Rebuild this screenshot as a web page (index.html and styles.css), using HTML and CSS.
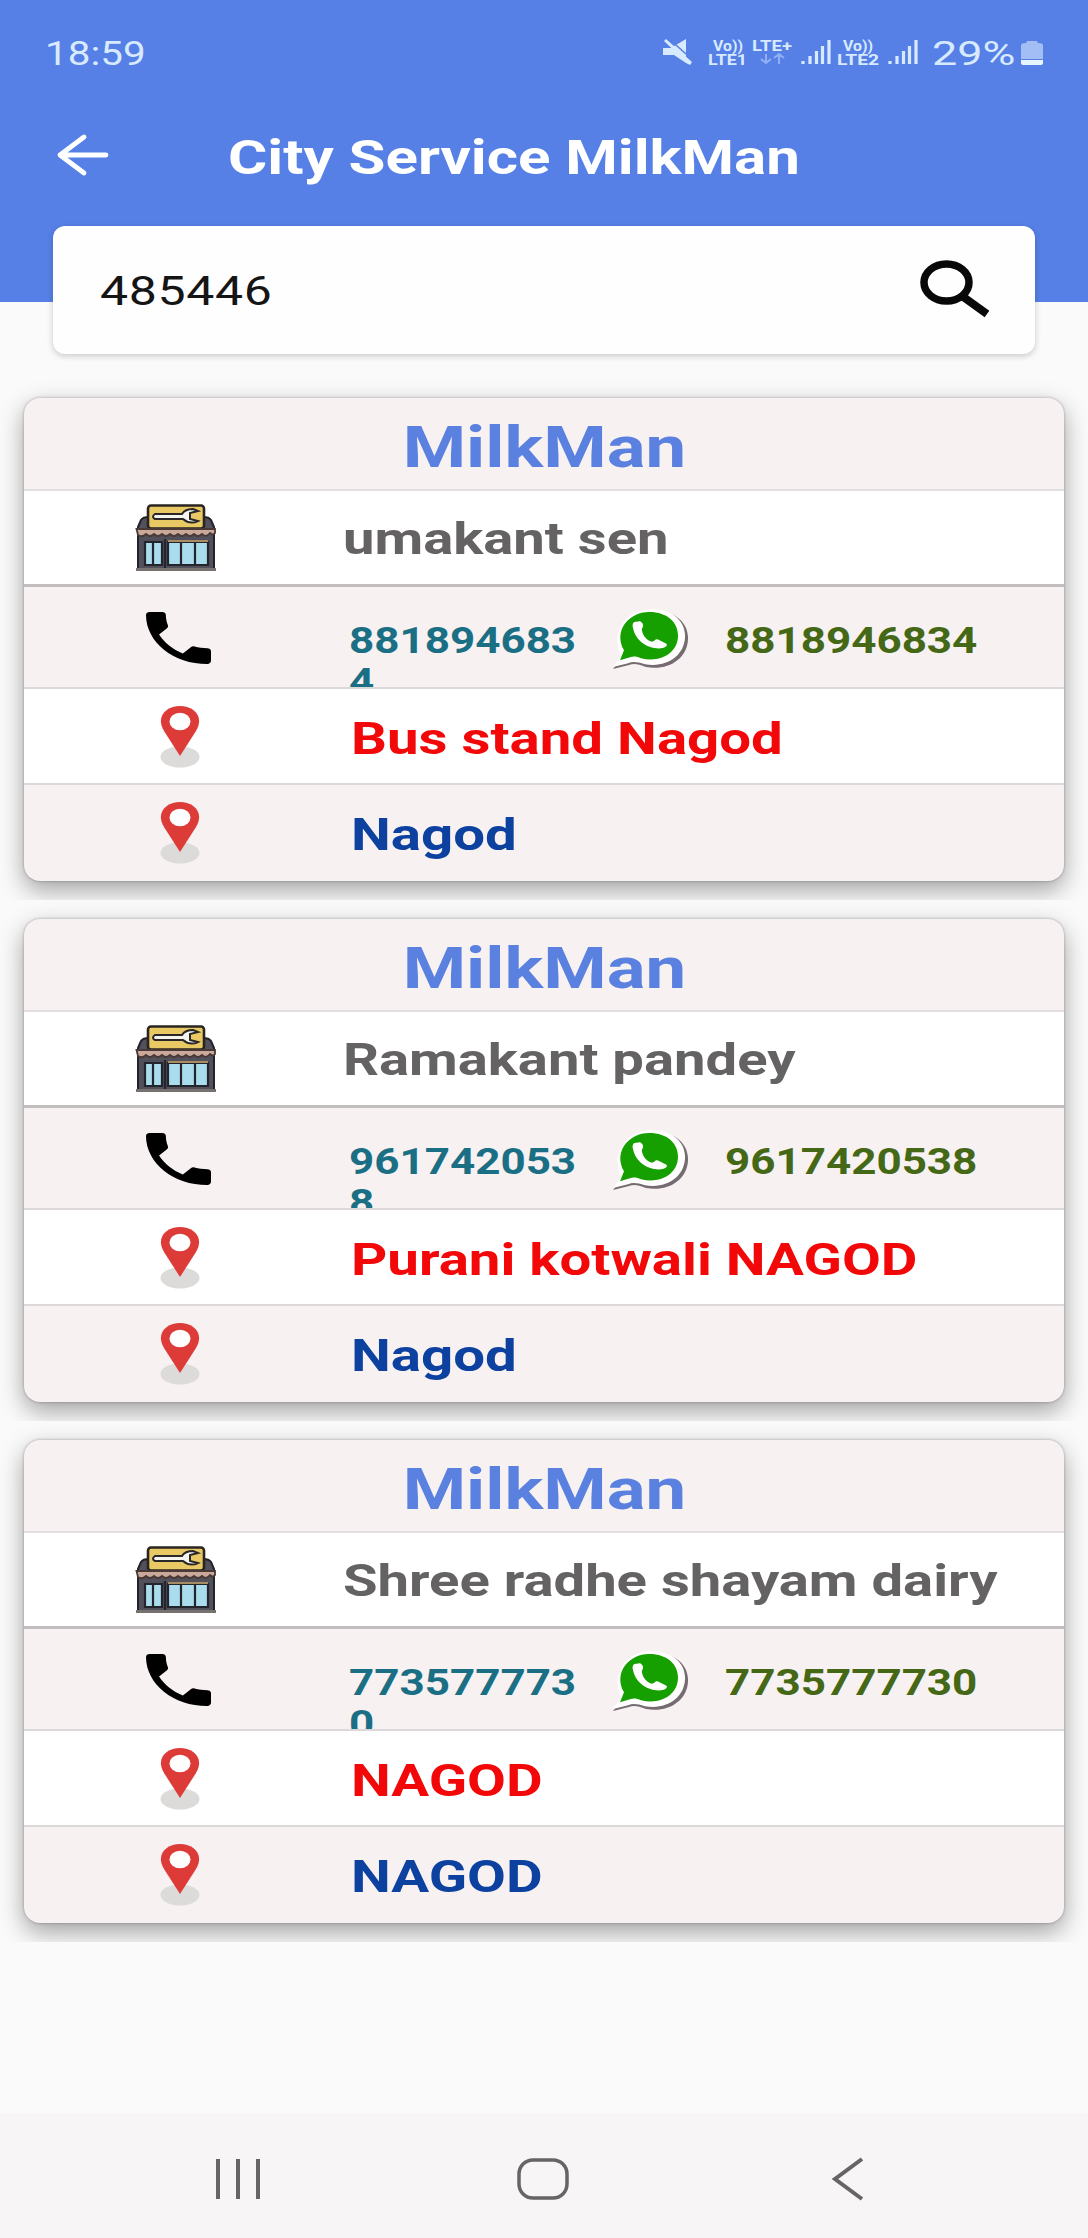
FILE: index.html
```
<!DOCTYPE html>
<html lang="en">
<head>
<meta charset="utf-8">
<title>City Service MilkMan</title>
<link rel="stylesheet" href="styles.css">
</head>
<body>
<svg class="sprite" width="0" height="0" aria-hidden="true">
  <symbol id="store" viewBox="0 0 82 67">
    <path d="M3 23L6 16Q8 13 14 13H68Q74 13 76 16L79 23V65H3Z" fill="#51505b" stroke="#24222a" stroke-width="2"/>
    <rect x="13" y="1.5" width="56" height="23" rx="3" fill="#e9c963" stroke="#292520" stroke-width="2.6"/>
    <path d="M20 10H47Q50 5 58 5L63 7L55 9V15L63 17Q55 21 48 15H20Q16 13 20 10Z" fill="#f5f4ef" stroke="#29272a" stroke-width="2"/>
    <path d="M1.500 25H80V29Q78 32 75 29Q71 34 67 30Q63 34 59 30Q55 34 51 30Q47 34 43 30Q39 34 35 30Q31 34 27 30Q23 34 19 30Q15 34 11 30Q7 34 3 31Z" fill="#caa99b" stroke="#493936" stroke-width="1.800"/>
    <path d="M10 38H27V61H10ZM33 38H73V61H33Z" fill="#a9dcec" stroke="#24252c" stroke-width="2.200"/>
    <path d="M18 38V61M46 38V61M60 38V61M30 35V64" stroke="#24252c" stroke-width="2.200"/>
    <path d="M33 37H73" stroke="#a88d63" stroke-width="2"/>
    <path d="M1 65.500H81" stroke="#77716f" stroke-width="3"/>
  </symbol>
  <symbol id="phone" viewBox="3 3 18 18" preserveAspectRatio="none">
    <path d="M6.620 10.790C8.060 13.620 10.380 15.930 13.210 17.380L15.410 15.180C15.680 14.910 16.080 14.820 16.430 14.940C17.550 15.310 18.760 15.510 20 15.510C20.550 15.510 21 15.960 21 16.510V20C21 20.550 20.550 21 20 21C10.610 21 3 13.390 3 4C3 3.450 3.450 3 4 3H7.500C8.050 3 8.500 3.450 8.500 4C8.500 5.250 8.700 6.450 9.070 7.570C9.180 7.920 9.100 8.310 8.820 8.590Z" fill="#000"/>
  </symbol>
  <symbol id="whatsapp" viewBox="0 0 78 66" preserveAspectRatio="none">
    <path d="M1 62L10 50C-1 26 14 4 40 3C63 2 77 15 76 32C75 52 56 64 34 60C26 57 22 56 17 58Z" fill="#766b70"/>
    <path d="M1 60L9 49C-2 25 14 2 38 1C61 1 74 14 73 30C72 49 54 61 33 57C26 55 21 54 16 56Z" fill="#fff"/>
    <path d="M8 53L12 43C1 23 17 4 37 4C56 4 66 15 66 28C66 46 48 56 29 51C25 49 21 49 18 50Z" fill="#16a000"/>
    <path d="M25 14C21 13 20 17 21 20C23 32 34 41 47 41C52 41 57 38 54 36L46 32C43 31 42 35 39 34C34 32 31 28 30 23C29 20 33 19 30 15C29 13 27 13 25 14Z" fill="#fff"/>
  </symbol>
  <symbol id="pin" viewBox="0 0 40 62">
    <ellipse cx="20" cy="51" rx="19.500" ry="10.500" fill="#dcdbda"/>
    <path d="M20 50L4 25C-5 10 7 0 20 0S45 10 36 25Z" fill="#dd3b38"/>
    <ellipse cx="20" cy="15.500" rx="10.500" ry="8.800" fill="#fff"/>
  </symbol>
  <symbol id="signal" viewBox="0 0 30 26">
    <path d="M2 22V25M9 17V25M15.500 12V25M21.500 7V25M28 1V25" stroke="#d8eaff" stroke-width="3.200"/>
  </symbol>
</svg>

<header class="header">
  <div class="status">
    <span class="time wide">18:59</span>
    <svg class="status-icons" width="257" height="30" viewBox="0 0 257 30" aria-hidden="true">
      <g fill="#d8eaff">
        <path d="M1 10H9L24 1V20L29 26H26L2 3L4 1L30 24L28 27L24 25L12 17H1Z"/>
        <path d="M3 1L31 26" stroke="#5680e6" stroke-width="1.500" transform="translate(2 -2)"/>
        <text class="net" x="51" y="13" textLength="30" lengthAdjust="spacingAndGlyphs">Vo))</text>
        <text class="net" x="46" y="27" textLength="39" lengthAdjust="spacingAndGlyphs">LTE1</text>
        <text class="net" x="90" y="13" textLength="40" lengthAdjust="spacingAndGlyphs">LTE+</text>
        <text class="net" x="181" y="13" textLength="30" lengthAdjust="spacingAndGlyphs">Vo))</text>
        <text class="net" x="175" y="27" textLength="42" lengthAdjust="spacingAndGlyphs">LTE2</text>
      </g>
      <path d="M104 16V25M99 21L104 25L109 21M117 26V17M112 20L117 16L122 20" fill="none" stroke="#8fb0f2" stroke-width="2"/>
      <use href="#signal" x="139" y="1" width="30" height="26"/>
      <use href="#signal" x="226" y="1" width="30" height="26"/>
    </svg>
    <span class="percent wide">29%</span>
    <svg class="battery" width="24" height="26" viewBox="0 0 24 26" aria-hidden="true">
      <path d="M1 5Q1 3 6 3L7 1H17L18 3Q23 3 23 5V19H1Z" fill="#a3bdf5"/>
      <path d="M1 20H23V23Q23 25 20 25H4Q1 25 1 23Z" fill="#e6f6ff"/>
    </svg>
  </div>
  <div class="titlebar">
    <svg class="back" width="54" height="44" viewBox="0 0 54 44" aria-hidden="true">
      <path d="M28 4L4 22L28 40M4 22H50" fill="none" stroke="#fff" stroke-width="4.800" stroke-linecap="round" stroke-linejoin="round"/>
    </svg>
    <h1 class="title wide">City Service MilkMan</h1>
  </div>
</header>

<div class="search">
  <span class="query wide">485446</span>
  <svg width="72" height="60" viewBox="0 0 72 60" aria-hidden="true">
    <ellipse cx="27.500" cy="22.500" rx="22.500" ry="18.500" fill="none" stroke="#080808" stroke-width="7.500"/>
    <path d="M43 36L68 54" stroke="#080808" stroke-width="8"/>
  </svg>
</div>

<main class="list">
  <section class="item"><article class="card">
    <h2 class="heading"><span class="wide">MilkMan</span></h2>
    <div class="row name"><svg class="i-store"><use href="#store"/></svg><span class="wide">umakant sen</span></div>
    <div class="row contact"><svg class="i-phone"><use href="#phone"/></svg><span class="call wide">8818946834</span><svg class="i-wa"><use href="#whatsapp"/></svg><span class="chat wide">8818946834</span></div>
    <div class="row place"><svg class="i-pin"><use href="#pin"/></svg><span class="wide">Bus stand Nagod</span></div>
    <div class="row city"><svg class="i-pin"><use href="#pin"/></svg><span class="wide">Nagod</span></div>
  </article></section>
  <section class="item"><article class="card">
    <h2 class="heading"><span class="wide">MilkMan</span></h2>
    <div class="row name"><svg class="i-store"><use href="#store"/></svg><span class="wide">Ramakant pandey</span></div>
    <div class="row contact"><svg class="i-phone"><use href="#phone"/></svg><span class="call wide">9617420538</span><svg class="i-wa"><use href="#whatsapp"/></svg><span class="chat wide">9617420538</span></div>
    <div class="row place"><svg class="i-pin"><use href="#pin"/></svg><span class="wide">Purani kotwali NAGOD</span></div>
    <div class="row city"><svg class="i-pin"><use href="#pin"/></svg><span class="wide">Nagod</span></div>
  </article></section>
  <section class="item"><article class="card">
    <h2 class="heading"><span class="wide">MilkMan</span></h2>
    <div class="row name"><svg class="i-store"><use href="#store"/></svg><span class="wide">Shree radhe shayam dairy</span></div>
    <div class="row contact"><svg class="i-phone"><use href="#phone"/></svg><span class="call wide">7735777730</span><svg class="i-wa"><use href="#whatsapp"/></svg><span class="chat wide">7735777730</span></div>
    <div class="row place"><svg class="i-pin"><use href="#pin"/></svg><span class="wide">NAGOD</span></div>
    <div class="row city"><svg class="i-pin"><use href="#pin"/></svg><span class="wide">NAGOD</span></div>
  </article></section>
</main>

<nav class="navbar">
  <svg width="50" height="44" viewBox="0 0 50 44"><path d="M5 2V42M25 2V42M45 2V42" stroke="#666466" stroke-width="4"/></svg>
  <svg width="54" height="44" viewBox="0 0 54 44"><rect x="2" y="3" width="48" height="38" rx="14" fill="none" stroke="#666466" stroke-width="3.500"/></svg>
  <svg width="34" height="44" viewBox="0 0 34 44"><path d="M31 2L4 22L31 42" fill="none" stroke="#666466" stroke-width="4"/></svg>
</nav>
</body>
</html>
```
FILE: styles.css
```
* { box-sizing: border-box; }
body {
  margin: 0;
  width: 1088px;
  height: 2238px;
  display: flex;
  flex-direction: column;
  overflow: hidden;
  background: #fbfafb;
  font-family: Roboto, "Liberation Sans", sans-serif;
}
svg { display: block; flex: none; }
.sprite { position: absolute; }
h1, h2 { margin: 0; }
/* Letterforms are wider than the font's own */
.wide {
  display: inline-block;
  transform: scaleX(1.25);
  transform-origin: left center;
  white-space: nowrap;
}
.header {
  height: 302px;
  flex: none;
  background: #5680e6;
}
.status {
  height: 104px;
  display: flex;
  align-items: center;
  padding: 2px 0 0 45px;
  color: #d8eaff;
}
.time { width: 617px; font-size: 33px; transform: scaleX(1.225); }
.net { font: bold 14px Roboto, sans-serif; }
.status-icons { margin-top: -1px; }
.percent { width: 89px; margin-left: 13px; font-size: 34px; transform: scaleX(1.32); }
.battery { margin-left: -1px; }
.titlebar {
  height: 102px;
  display: flex;
  align-items: center;
  padding-left: 56px;
}
.title { margin-left: 118px; padding-top: 5px; font-size: 48px; line-height: 60px; color: #fff; }
.search {
  width: 982px;
  height: 128px;
  flex: none;
  margin: -76px 0 0 53px;
  padding: 0 44px 0 47px;
  display: flex;
  align-items: center;
  justify-content: space-between;
  border-radius: 12px;
  background: #fefefe;
  box-shadow: 0 2px 6px rgba(0, 0, 0, .2);
}
.query { padding-top: 3px; font-size: 40px; letter-spacing: .5px; color: #151515; transform: scaleX(1.25); }
.list { flex: none; margin-top: 25px; }
.item {
  height: 521px;
  padding: 19px 24px 18px;
  overflow: hidden;
}
.card {
  height: 483px;
  border-radius: 16px;
  overflow: hidden;
  background: #f7f1f2;
  box-shadow: 0 9px 24px rgba(0, 0, 0, .36), 0 0 3px rgba(0, 0, 0, .3);
}
.heading {
  height: 93px;
  padding-top: 6px;
  border-bottom: 2px solid #e3dfe0;
  text-align: center;
  font-size: 58px;
  line-height: 86px;
  color: #5a80e0;
}
.heading .wide { transform-origin: center; }
.row {
  height: 96px;
  display: grid;
  grid-template-columns: 319px 1fr;
  align-items: center;
  border-bottom: 2px solid #dcd8d9;
  font-weight: 700;
}
.name { background: #fff; border-bottom: 3px solid #c2bebf; font-size: 44px; color: #646263; }
.name .wide { padding-top: 3px; transform: scaleX(1.277); }
.contact {
  height: 102px;
  grid-template-columns: 325px 263px 113px 1fr;
  align-items: start;
  overflow: hidden;
  font-size: 36.500px;
  line-height: 41px;
}
.contact .wide { padding-top: 33px; transform: scaleX(1.205); }
.contact .call { width: 196px; white-space: normal; overflow-wrap: anywhere; color: #1b6f85; }
.chat { color: #456817; }
.place, .city { grid-template-columns: 327px 1fr; font-size: 45px; }
.place .wide, .city .wide { padding-top: 5px; transform: scaleX(1.253); }
.place { background: #fff; color: #f20808; }
.city { border: 0; color: #0c41a0; }
.city .wide { padding-top: 3px; }
.i-store { width: 82px; height: 67px; margin-left: 111px; }
.i-phone { width: 65px; height: 52px; margin: 25px 0 0 122px; }
.i-wa { width: 78px; height: 65px; margin-top: 21px; }
.i-pin { width: 40px; height: 62px; margin: 2px 0 0 136px; }
.city .i-pin { margin-top: -1px; }
.navbar {
  height: 125px;
  flex: none;
  margin-top: auto;
  padding: 6px 223px 0 213px;
  display: flex;
  align-items: center;
  justify-content: space-between;
  background: #f7f5f6;
}
.navbar svg:nth-child(2) { margin-right: 7px; }
```
